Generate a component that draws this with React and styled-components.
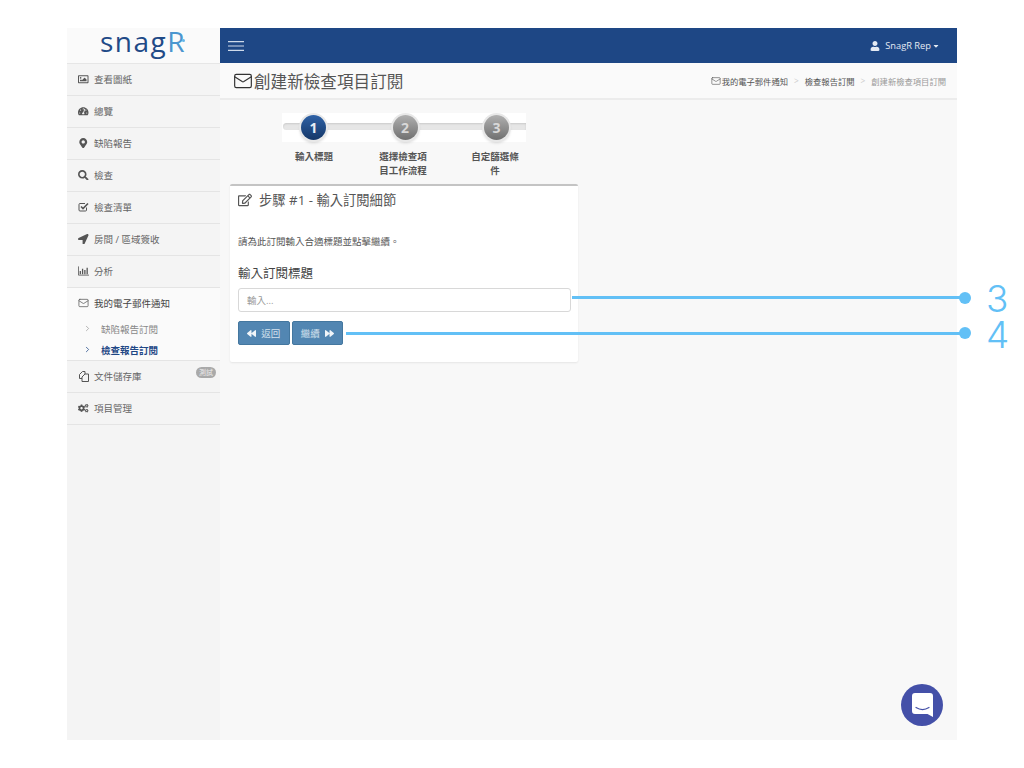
import React from "react";
import styled, { createGlobalStyle } from "styled-components";
import {
  FaRegImage,
  FaTachometerAlt,
  FaMapMarkerAlt,
  FaSearch,
  FaLocationArrow,
  FaCogs,
  FaRegEdit,
  FaBackward,
  FaForward,
  FaUser,
  FaCaretDown,
} from "react-icons/fa";
import { ChevronRight, Mail } from "lucide-react";

const FONT = `"Open Sans", "Noto Sans CJK TC", sans-serif`;

const GlobalStyle = createGlobalStyle`
  html, body {
    margin: 0;
    background: #fff;
    font-family: ${FONT};
  }
`;

const CheckIcon = () => (
  <svg width="11" height="10" viewBox="0 0 11 10" fill="none" stroke="currentColor">
    <path d="M8.500 5.500V8a1 1 0 0 1-1 1H2a1 1 0 0 1-1-1V2.500a1 1 0 0 1 1-1h5" />
    <path d="M3 4.500l2 2 5-5" strokeWidth="1.600" />
  </svg>
);

const ChartIcon = () => (
  <svg width="12" height="10" viewBox="0 0 12 10" fill="none" stroke="currentColor">
    <path d="M.5 0v9.500H12" strokeWidth="0.900" />
    <path d="M2.500 8.500V5M5 8.500V2.500M7.500 8.500V4M10 8.500V1.500" strokeWidth="1.400" />
  </svg>
);

const FilesIcon = () => (
  <svg width="11" height="11" viewBox="0 0 11 11" fill="none" stroke="currentColor" strokeWidth="1">
    <path d="M4 7.500H1.500v-4l3-3h2.500v2.500" />
    <path d="M4 10.500V6l3-3h3.500v7.500z" />
  </svg>
);

const navItems = [
  { icon: FaRegImage, label: "查看圖紙" },
  { icon: FaTachometerAlt, label: "總覽" },
  { icon: FaMapMarkerAlt, label: "缺陷報告" },
  { icon: FaSearch, label: "檢查" },
  { icon: CheckIcon, label: "檢查清單" },
  { icon: FaLocationArrow, label: "房間 / 區域簽收" },
  { icon: ChartIcon, label: "分析" },
];

const steps = [
  { n: 1, label: "輸入標題", active: true },
  { n: 2, label: "選擇檢查項目工作流程" },
  { n: 3, label: "自定篩選條件" },
];

const App = () => (
  <>
    <GlobalStyle />
    <Frame>
      <Sidebar>
        <LogoBox>
          <Logo>
            snag<LogoR>R</LogoR>
          </Logo>
          <LogoDot />
        </LogoBox>
        {navItems.map(({ icon: Icon, label }) => (
          <NavItem key={label}>
            <NavIcon>
              <Icon />
            </NavIcon>
            {label}
          </NavItem>
        ))}
        <OpenGroup>
          <OpenHead>
            <NavIcon>
              <Mail size={12} strokeWidth={1.6} />
            </NavIcon>
            我的電子郵件通知
          </OpenHead>
          <SubItem>
            <ChevronRight size={9} strokeWidth={1.6} />
            缺陷報告訂閱
          </SubItem>
          <SubItem $active>
            <ChevronRight size={9} strokeWidth={2} />
            檢查報告訂閱
          </SubItem>
        </OpenGroup>
        <NavItem>
          <NavIcon>
            <FilesIcon />
          </NavIcon>
          文件儲存庫
          <Badge>測試</Badge>
        </NavItem>
        <NavItem>
          <NavIcon>
            <FaCogs />
          </NavIcon>
          項目管理
        </NavItem>
      </Sidebar>
      <Main>
        <TopBar>
          <MenuButton>
            <svg width="16" height="10" viewBox="0 0 16 10" stroke="currentColor" strokeWidth="1.200">
              <path d="M0 .6h16M0 5h16M0 9.400h16" />
            </svg>
          </MenuButton>
          <UserMenu>
            <FaUser />
            <span>SnagR Rep</span>
            <FaCaretDown />
          </UserMenu>
        </TopBar>
        <TitleBar>
          <PageTitle>
            <Mail size={20} strokeWidth={1.400} />
            創建新檢查項目訂閱
          </PageTitle>
          <Crumbs>
            <Crumb>
              <Mail size={10} strokeWidth={1.500} />
              我的電子郵件通知
            </Crumb>
            <CrumbSep>&gt;</CrumbSep>
            <Crumb>檢查報告訂閱</Crumb>
            <CrumbSep>&gt;</CrumbSep>
            <Crumb $muted>創建新檢查項目訂閱</Crumb>
          </Crumbs>
        </TitleBar>
        <Content>
          <Stepper>
            <Track>
              {steps.map((s) => (
                <Circle key={s.n} $active={s.active}>
                  {s.n}
                </Circle>
              ))}
            </Track>
            <StepLabels>
              {steps.map((s) => (
                <StepLabel key={s.n}>{s.label}</StepLabel>
              ))}
            </StepLabels>
          </Stepper>
          <Card>
            <CardTitle>
              <FaRegEdit />
              步驟 #1 - 輸入訂閱細節
            </CardTitle>
            <Hint>請為此訂閱輸入合適標題並點擊繼續。</Hint>
            <FieldLabel>輸入訂閱標題</FieldLabel>
            <TextInput placeholder="輸入..." />
            <Buttons>
              <Button>
                <FaBackward />
                返回
              </Button>
              <Button>
                繼續
                <FaForward />
              </Button>
            </Buttons>
          </Card>
        </Content>
      </Main>
      <Callout $top={268} $left={505} $width={392}>
        <CalloutNum>3</CalloutNum>
      </Callout>
      <Callout $top={303.500} $left={279} $width={618}>
        <CalloutNum>4</CalloutNum>
      </Callout>
      <ChatBubble>
        <svg width="21" height="24" viewBox="0 0 21 24">
          <path
            d="M3 0h15a3 3 0 0 1 3 3v21l-5.500-3H3a3 3 0 0 1-3-3V3a3 3 0 0 1 3-3z"
            fill="#fff"
          />
          <path
            d="M4 14.500c4 2.500 9 2.500 13 0"
            fill="none"
            stroke="#4450a8"
            strokeWidth="1.200"
            strokeLinecap="round"
          />
        </svg>
      </ChatBubble>
    </Frame>
  </>
);

export default App;

const Frame = styled.div`
  position: relative;
  display: flex;
  width: 890px;
  height: 712px;
  margin: 28px 0 0 67px;
`;

const Sidebar = styled.aside`
  width: 153px;
  flex-shrink: 0;
  background: #f4f4f4;
`;

const LogoBox = styled.div`
  position: relative;
  display: flex;
  justify-content: center;
  height: 35px;
  padding-right: 1px;
  background: #fafafa;
  border-bottom: 1px solid #e6e6e6;
`;

const Logo = styled.span`
  margin-top: -4px;
  font-family: "Open Sans", sans-serif;
  font-size: 28px;
  line-height: 35px;
  letter-spacing: 1.500px;
  color: #1f4a87;
`;

const LogoR = styled.span`
  color: #4b96cf;
`;

const LogoDot = styled.i`
  position: absolute;
  left: 115px;
  top: 11px;
  width: 3px;
  height: 3px;
  border-radius: 50%;
  background: #63b5e8;
`;

const NavItem = styled.div`
  position: relative;
  display: flex;
  align-items: center;
  height: 30px;
  padding: 0 0 1px 11px;
  font-size: 9.500px;
  color: #666;
  background: #f4f4f4;
  border-bottom: 1px solid #e4e4e4;
`;

const NavIcon = styled.span`
  display: flex;
  justify-content: center;
  width: 11px;
  margin-right: 5px;
  font-size: 10.500px;
  color: #555;
`;

const OpenGroup = styled.div`
  height: 72px;
  background: #fafafa;
  border-bottom: 1px solid #e4e4e4;
`;

const OpenHead = styled.div`
  display: flex;
  align-items: center;
  height: 30px;
  padding-left: 11px;
  font-size: 9.500px;
  color: #444;
`;

const SubItem = styled.div`
  display: flex;
  align-items: center;
  height: 21px;
  padding-left: 16px;
  font-size: 9.500px;
  font-weight: ${({ $active }) => ($active ? 700 : 400)};
  color: ${({ $active }) => ($active ? "#1e4785" : "#888")};

  svg {
    margin-right: 9px;
  }
`;

const Badge = styled.span`
  position: absolute;
  right: 4px;
  top: 6px;
  padding: 0 3px;
  border-radius: 6px;
  font-size: 7px;
  line-height: 11px;
  color: #eee;
  background: #a9a9a9;
`;

const Main = styled.main`
  flex: 1;
  display: flex;
  flex-direction: column;
  min-width: 0;
  background: #f8f8f8;
`;

const TopBar = styled.header`
  display: flex;
  justify-content: space-between;
  align-items: center;
  height: 35px;
  padding: 0 17px 0 8px;
  background: #1e4785;
  color: #fff;
`;

const MenuButton = styled.div`
  display: flex;
  color: #cfdaea;
`;

const UserMenu = styled.div`
  display: flex;
  align-items: center;
  gap: 5px;
  font-size: 9.300px;
  color: #e4eaf3;

  svg:first-child {
    font-size: 10px;
  }
  svg:last-child {
    font-size: 8px;
    margin-left: -4px;
  }
`;

const TitleBar = styled.div`
  display: flex;
  justify-content: space-between;
  align-items: center;
  height: 35px;
  padding: 0 11px 0 13px;
  background: #fafafa;
  border-bottom: 2px solid #ececec;
`;

const PageTitle = styled.h1`
  display: flex;
  align-items: center;
  gap: 1px;
  margin: 0;
  font-size: 16.600px;
  font-weight: 400;
  color: #555;

  svg {
    color: #333;
  }
`;

const Crumbs = styled.div`
  display: flex;
  align-items: center;
  font-size: 8.300px;
  color: #555;
`;

const Crumb = styled.span`
  display: flex;
  align-items: center;
  gap: 1px;
  color: ${({ $muted }) => ($muted ? "#999" : "#555")};
`;

const CrumbSep = styled.span`
  margin: 0 6px;
  color: #ccc;
`;

const Content = styled.div`
  padding: 13px 10px 0;
`;

const Stepper = styled.div`
  width: 244px;
  margin-left: 52px;
`;

const Track = styled.div`
  position: relative;
  display: flex;
  justify-content: space-between;
  align-items: center;
  height: 29px;
  padding: 0 17px 0 19px;
  background: #fff;

  &::before {
    content: "";
    position: absolute;
    left: 1px;
    right: 0;
    top: 10px;
    height: 7px;
    border-radius: 4px 0 0 4px;
    background: #e6e6e6;
    box-shadow: inset 0 1px 2px rgba(0, 0, 0, 0.12);
  }
`;

const Circle = styled.div`
  position: relative;
  display: flex;
  justify-content: center;
  align-items: center;
  width: 25px;
  height: 25px;
  border-radius: 50%;
  font-size: 14px;
  font-weight: 700;
  color: ${({ $active }) => ($active ? "#e8eef6" : "#d8d8d8")};
  background: ${({ $active }) =>
    $active
      ? "linear-gradient(#2f62a6, #153768)"
      : "linear-gradient(#b0b0b0, #707070)"};
  box-shadow: 0 0 0 2px #e8e8e8, 0 2px 3px 1px rgba(0, 0, 0, 0.15);
`;

const StepLabels = styled.div`
  display: grid;
  grid-template-columns: 89px 92px 56px;
  margin-top: 8px;
  padding-left: 4px;
`;

const StepLabel = styled.div`
  width: 56px;
  text-align: center;
  font-size: 9.500px;
  font-weight: 700;
  line-height: 14px;
  color: #555;
`;

const Card = styled.section`
  box-sizing: content-box;
  width: 332px;
  height: 176px;
  margin-top: 6px;
  padding: 0 8px;
  background: #fff;
  border-top: 2px solid #c4c4c4;
  border-radius: 2px;
  box-shadow: 0 1px 2px rgba(0, 0, 0, 0.08);
`;

const CardTitle = styled.h2`
  display: flex;
  align-items: center;
  gap: 7px;
  height: 19px;
  margin: 0;
  padding-top: 4px;
  font-size: 13.300px;
  font-weight: 400;
  color: #555;

  svg {
    font-size: 14px;
  }
`;

const Hint = styled.p`
  margin: 26px 0 0;
  font-size: 9.500px;
  line-height: 14px;
  color: #555;
`;

const FieldLabel = styled.div`
  margin-top: 16px;
  font-size: 12.500px;
  line-height: 18px;
  color: #444;
`;

const TextInput = styled.input`
  display: block;
  box-sizing: border-box;
  width: 333px;
  height: 24px;
  margin-top: 5px;
  padding: 0 8px;
  border: 1px solid #d8d8d8;
  border-radius: 3px;
  outline: none;
  background: #fff;
  font-family: ${FONT};
  font-size: 9.500px;

  &::placeholder {
    color: #999;
  }
`;

const Buttons = styled.div`
  display: flex;
  gap: 2px;
  margin-top: 9px;
`;

const Button = styled.button`
  display: flex;
  justify-content: center;
  align-items: center;
  gap: 5px;
  width: 51.500px;
  height: 24px;
  padding: 0;
  border: 1px solid #44779f;
  border-radius: 2px;
  background: #5286b2;
  font-family: ${FONT};
  font-size: 9.500px;
  color: #d5e2ee;

  svg {
    font-size: 9px;
    color: #f1f5f9;
  }
`;

const Callout = styled.div`
  position: absolute;
  top: ${({ $top }) => $top}px;
  left: ${({ $left }) => $left}px;
  width: ${({ $width }) => $width}px;
  height: 3px;
  background: #62c0f6;

  &::after {
    content: "";
    position: absolute;
    right: -7px;
    top: -4.500px;
    width: 12px;
    height: 12px;
    border-radius: 50%;
    background: #62c0f6;
  }
`;

const CalloutNum = styled.span`
  position: absolute;
  left: calc(100% + 22px);
  top: -12px;
  font-family: "Inter", sans-serif;
  font-size: 37px;
  font-weight: 300;
  line-height: 30px;
  color: #62c0f6;
`;

const ChatBubble = styled.div`
  position: absolute;
  right: 14px;
  bottom: 14px;
  display: flex;
  justify-content: center;
  align-items: center;
  width: 42px;
  height: 42px;
  border-radius: 50%;
  background: #4450a8;
`;
